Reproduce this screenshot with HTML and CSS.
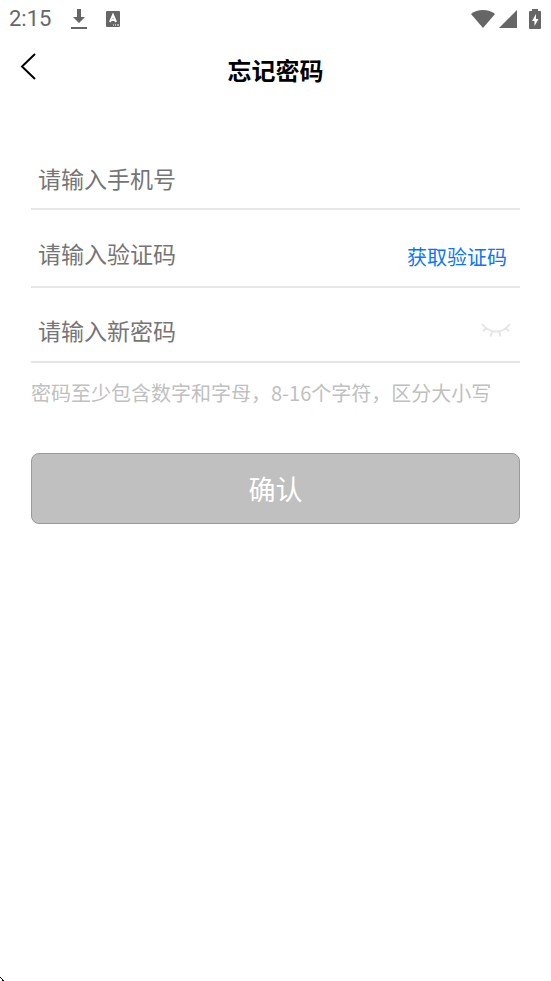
FILE: index.html
```html
<!DOCTYPE html>
<html lang="zh-CN">
<head>
<meta charset="utf-8">
<meta name="viewport" content="width=device-width, initial-scale=1">
<title>忘记密码</title>
<link rel="stylesheet" href="styles.css">
</head>
<body>
<div class="status">
  <span class="time">2:15</span>
  <svg class="download" width="16" height="22" viewBox="0 0 16 22" aria-hidden="true"><path fill="#666" d="M6 1h4v8h4l-6 6-6-6h4zM0 19h16v2H0z"/></svg>
  <svg class="keyboard" width="16" height="18" viewBox="0 0 16 18" aria-hidden="true"><rect x="1" y="1" width="14" height="16" rx="1" fill="#666"/><path d="M5 12 8 5l3 7M6 10h4" fill="none" stroke="#fff" stroke-width="2"/><path d="M8 15h1m1 0h1m1 0h2" stroke="#fff"/></svg>
  <svg class="wifi" width="24" height="20" viewBox="0 0 24 20" aria-hidden="true"><path fill="#666" d="M0 5Q5 1 12 1t12 4L12 19z"/></svg>
  <svg class="signal" width="18" height="18" viewBox="0 0 18 18" aria-hidden="true"><path fill="#666" d="M18 0v18H0z"/></svg>
  <svg class="battery" width="12" height="20" viewBox="0 0 12 20" aria-hidden="true"><path fill="#666" d="M3 0h6v2h2q1 0 1 1v16q0 1-1 1H1q-1 0-1-1V3q0-1 1-1h2z"/><path fill="#fff" d="M7 5 3 12h2.500v5L9.500 10H7z"/></svg>
</div>
<header class="header">
  <button class="back" type="button" aria-label="返回"><svg width="16" height="27" viewBox="0 0 16 27" aria-hidden="true"><path d="M15 1 2 13.500 15 26" fill="none" stroke="#000" stroke-width="2"/></svg></button>
  <h1 class="title">忘记密码</h1>
</header>
<main class="main">
  <form class="form">
    <div class="fields">
      <div class="field"><input class="input" type="tel" placeholder="请输入手机号" aria-label="手机号"></div>
      <div class="field field-action"><input class="input" type="text" placeholder="请输入验证码" aria-label="验证码"><button class="code" type="button">获取验证码</button></div>
      <div class="field field-action"><input class="input" type="password" placeholder="请输入新密码" aria-label="新密码"><button class="eye" type="button" aria-label="显示密码"><svg width="30" height="16" viewBox="0 0 30 16" aria-hidden="true"><path d="M1 2Q7 9.500 15 9.500t14-7.500M5 5.500 2 9.500M11 9l-1.500 5.500M18 9l1.500 5.500M25 5.500l3 4" fill="none" stroke="#e6e6e6" stroke-width="2"/></svg></button></div>
    </div>
    <p class="hint">密码至少包含数字和字母，8-16个字符，区分大小写</p>
    <button class="submit" type="submit">确认</button>
  </form>
</main>
<svg class="corner" width="4" height="4" viewBox="0 0 4 4" aria-hidden="true"><path d="M0 0h1v1h1v1h1v1h1v1H2V2H1V1H0z"/></svg>
</body>
</html>
```
FILE: styles.css
```css
* {
  box-sizing: border-box;
}

body {
  margin: 0;
  min-height: 100vh;
  display: flex;
  flex-direction: column;
  background: #fff;
  font-family: "Noto Sans CJK SC", sans-serif;
}

button {
  padding: 0;
  border: 0;
  background: none;
  font-family: inherit;
}

svg {
  display: block;
}

.status {
  display: flex;
  align-items: center;
  height: 38px;
  padding: 0 10px 0 9px;
  color: #666;
}

.time {
  font: 400 22px/38px Roboto, sans-serif;
}

.download {
  margin-left: 20px;
}

.keyboard {
  margin-left: 18px;
}

.wifi {
  margin-left: auto;
}

.signal {
  margin-left: 4px;
}

.battery {
  margin-left: 12px;
}

.header {
  display: grid;
  grid-template-columns: 60px 1fr 60px;
  align-items: center;
  height: 64px;
}

.back {
  height: 56px;
  padding: 0 0 8px 20px;
}

.title {
  margin: 0;
  text-align: center;
  font-size: 24px;
  line-height: 36px;
  font-weight: 700;
}

.main {
  flex: 1;
  padding: 46px 31px 0;
}

.fields {
  display: grid;
  grid-template-rows: 62px 78px 75px;
}

.field {
  display: flex;
  align-items: center;
  border-bottom: 2px solid #e6e6e6;
}

.field-action {
  padding-top: 10px;
}

.input {
  flex: 1;
  min-width: 0;
  height: 60px;
  padding: 0 7px;
  border: 0;
  outline: 0;
  background: none;
  font-family: inherit;
  font-size: 23px;
}

.input::placeholder {
  color: #757575;
}

.code {
  height: 60px;
  padding-top: 6px;
  margin-right: 13px;
  color: #0a74ff;
  font-size: 20px;
}

.eye {
  height: 60px;
  margin-right: 9px;
}

.hint {
  margin: 15px 0 45px;
  color: #c0c0c0;
  font-size: 20px;
  line-height: 30px;
}

.submit {
  display: block;
  width: 100%;
  height: 71px;
  border: 1px solid #999;
  border-radius: 8px;
  background: #c0c0c0;
  color: #fff;
  font-size: 27px;
}
```
